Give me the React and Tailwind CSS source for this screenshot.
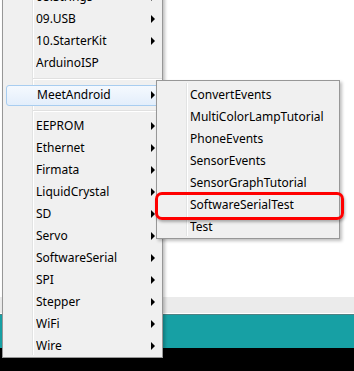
import React from 'react';

const mainTop = ['08.Strings', '09.USB', '10.StarterKit'];
const mainBottom = [
  'EEPROM', 'Ethernet', 'Firmata', 'LiquidCrystal', 'SD', 'Servo',
  'SoftwareSerial', 'SPI', 'Stepper', 'WiFi', 'Wire',
];
const subItems = [
  'ConvertEvents', 'MultiColorLampTutorial', 'PhoneEvents', 'SensorEvents',
  'SensorGraphTutorial', 'SoftwareSerialTest', 'Test',
];

function Arrow() {
  return <span className="w-0 h-0 border-y-[4px] border-y-transparent border-l-[4px] border-l-black" />;
}

function Item({ label, arrow }) {
  return (
    <div className="h-[22px] flex items-center pl-[33px] pr-[7px]">
      <span className="flex-1 truncate">{label}</span>
      {arrow && <Arrow />}
    </div>
  );
}

function Separator() {
  return (
    <div className="h-[10px] flex flex-col justify-center pl-[30px]">
      <div className="h-px bg-[#e0e0e0]" />
      <div className="h-px bg-white" />
    </div>
  );
}

export default function App() {
  return (
    <div
      className="relative w-[354px] h-[371px] overflow-hidden flex flex-col bg-white text-[12px] text-black"
      style={{ fontFamily: '"Noto Sans", "Liberation Sans", sans-serif' }}
    >
      {/* window behind the menus */}
      <div className="h-[297px] bg-white" />
      <div className="h-[16px] bg-[#ebebeb]" />
      <div className="h-px bg-white" />
      <div className="h-px bg-[#4f8284]" />
      <div className="h-[33px] bg-[#17a0a4]" />
      <div className="flex-1 bg-black" />

      {/* main dropdown */}
      <div className="absolute left-[2px] top-[-16px] w-[161px] border border-[#979797] bg-[#f0f0f0] pt-px shadow-[2px_2px_3px_rgba(0,0,0,0.25)]">
        <div className="absolute left-[29px] top-0 bottom-[2px] w-[2px] flex">
          <div className="w-px bg-[#e2e3e3]" />
          <div className="w-px bg-white" />
        </div>
        <div className="relative">
          {mainTop.map(l => <Item key={l} label={l} arrow />)}
          <Item label="ArduinoISP" />
          <Separator />
          <div className="h-[22px] flex items-center">
            <div className="ml-[3px] mr-[2px] h-[21px] flex-1 flex items-center pl-[30px] pr-[4px] rounded-[3px] border border-[#a8cdf0] bg-linear-to-b from-[#f5f9fe] to-[#e3eefb]">
              <span className="flex-1">MeetAndroid</span>
              <Arrow />
            </div>
          </div>
          <div className="h-[9px] flex flex-col justify-center pl-[30px]">
            <div className="h-px bg-[#e0e0e0]" />
            <div className="h-px bg-white" />
          </div>
          {mainBottom.map(l => <Item key={l} label={l} arrow />)}
        </div>
      </div>

      {/* submenu */}
      <div className="absolute left-[156px] top-[80px] w-[184px] border border-[#979797] bg-[#f0f0f0] pt-[3px] shadow-[2px_2px_3px_rgba(0,0,0,0.25)]">
        <div className="absolute left-[29px] top-[2px] bottom-[2px] w-[2px] flex">
          <div className="w-px bg-[#e2e3e3]" />
          <div className="w-px bg-white" />
        </div>
        <div className="relative">
          {subItems.map(l => <Item key={l} label={l} />)}
        </div>
      </div>

      {/* red annotation */}
      <div className="absolute left-[155px] top-[192px] w-[189px] h-[28px] rounded-[7px] border-[3px] border-[#ff0000] shadow-[1px_2px_3px_rgba(0,0,0,0.3)]" />
    </div>
  );
}
